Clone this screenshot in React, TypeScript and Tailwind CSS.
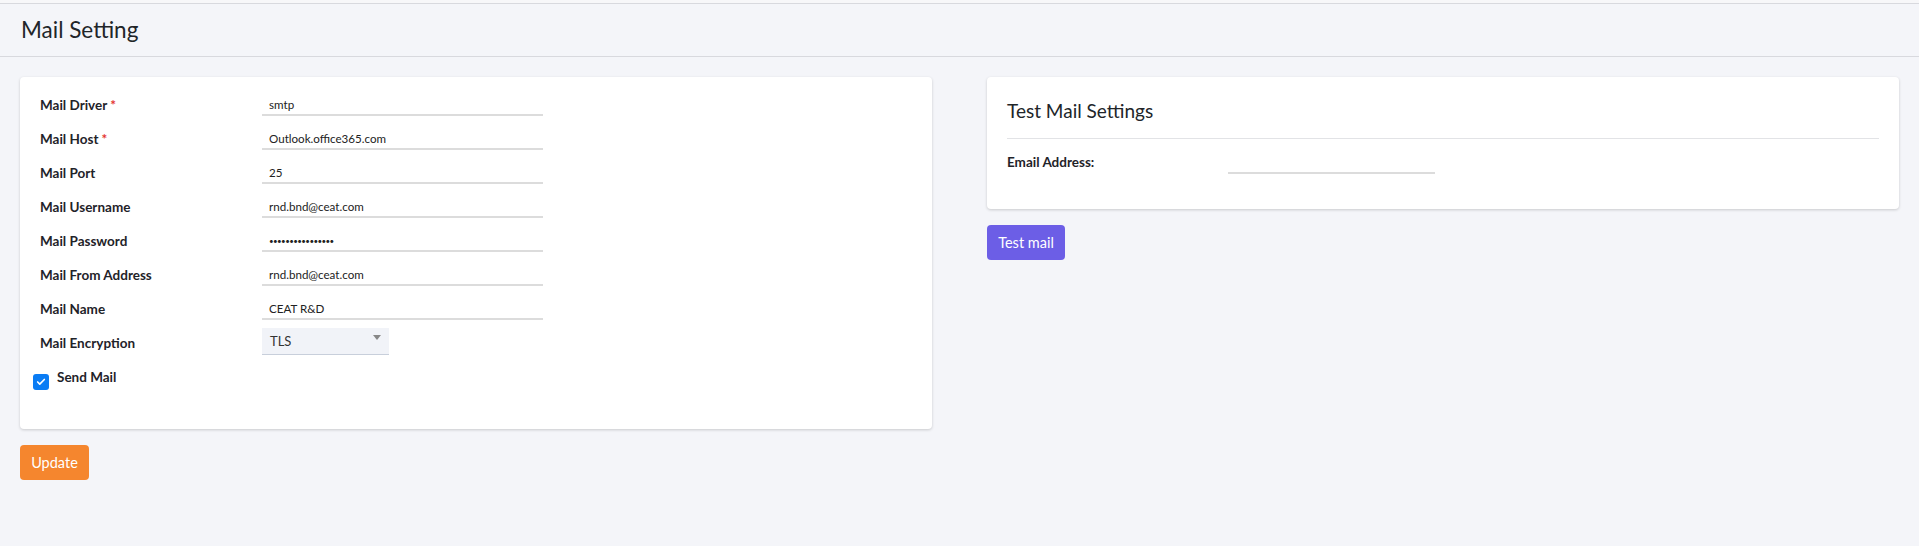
import { Check } from "lucide-react";

const fields = [
  { label: "Mail Driver", value: "smtp", required: true },
  { label: "Mail Host", value: "Outlook.office365.com", required: true },
  { label: "Mail Port", value: "25" },
  { label: "Mail Username", value: "rnd.bnd@ceat.com" },
  { label: "Mail Password", value: "••••••••••••••••", password: true },
  { label: "Mail From Address", value: "rnd.bnd@ceat.com" },
  { label: "Mail Name", value: "CEAT R&D" },
];

function UnderlineInput({ value, password, className = "" }: { value: string; password?: boolean; className?: string }) {
  return (
    <div
      className={`h-[24px] border-b-2 border-[#dcdcdc] pl-[7px] leading-[26px] text-[#222] ${
        password ? "text-[8px] tracking-[-0.6px]" : "text-[11.6px]"
      } ${className}`}
    >
      {value}
    </div>
  );
}

export default function App() {
  return (
    <div className="min-h-[546px] bg-[#f4f5f9] font-['Lato',sans-serif] text-[#212529]">
      <div className="h-[3px] bg-[#f7f7f9]" />
      <div className="flex h-[54px] items-center border-y border-[#d8d9de] px-[21px]">
        <h1 className="text-[22.5px] leading-none text-[#212529]">Mail Setting</h1>
      </div>

      <div className="grid grid-cols-2 gap-[55px] px-[20px] pt-[20px]">
        <div>
          <div className="rounded-[4px] bg-white pb-[39px] pl-[20px] pt-[15px] shadow-[0_1px_3px_rgba(0,0,0,0.18)]">
            {fields.map((f) => (
              <div key={f.label} className="flex h-[34px] items-start">
                <label className="w-[222px] text-[13.5px] font-bold leading-[26px] text-[#1f2329]">
                  {f.label}
                  {f.required && <span className="ml-[3px] text-[#e3342f]">*</span>}
                </label>
                <UnderlineInput value={f.value} password={f.password} className="w-[281px]" />
              </div>
            ))}
            <div className="flex h-[34px] items-start">
              <label className="w-[222px] text-[13.5px] font-bold leading-[26px] text-[#1f2329]">Mail Encryption</label>
              <div className="relative -mt-[2px] flex h-[27px] w-[127px] items-center border-b border-[#c8cfdb] bg-[#f1f3f8] pl-[8px] pt-[2px] text-[13px] text-[#333]">
                TLS
                <span className="absolute right-[8px] top-[7px] h-0 w-0 border-x-[4px] border-t-[5px] border-x-transparent border-t-[#888]" />
              </div>
            </div>
            <div className="flex items-start">
              <div className="-ml-[7px] mt-[10px] flex h-[16px] w-[16px] items-center justify-center rounded-[3px] bg-[#0a7cf4]">
                <Check className="h-[10px] w-[10px] text-white" strokeWidth={4} />
              </div>
              <span className="ml-[8px] text-[13.5px] font-bold leading-[26px] text-[#1f2329]">Send Mail</span>
            </div>
          </div>
          <button className="mt-[16px] h-[35px] w-[69px] rounded-[4px] bg-[#f5862e] text-[14.5px] text-white">
            Update
          </button>
        </div>

        <div>
          <div className="rounded-[4px] bg-white px-[20px] pb-[34px] pt-[20px] shadow-[0_1px_3px_rgba(0,0,0,0.18)]">
            <h2 className="text-[19px] leading-[28px] text-[#212529]">Test Mail Settings</h2>
            <div className="mt-[13px] border-t border-[#e2e3e6]" />
            <div className="mt-[10px] flex items-start">
              <label className="w-[221px] text-[13.5px] font-bold leading-[26px] text-[#1f2329]">Email Address:</label>
              <UnderlineInput value="" className="mt-[1px] w-[207px]" />
            </div>
          </div>
          <button className="mt-[16px] h-[35px] w-[78px] rounded-[4px] bg-[#6c5ee6] text-[14.5px] text-white">
            Test mail
          </button>
        </div>
      </div>
    </div>
  );
}
